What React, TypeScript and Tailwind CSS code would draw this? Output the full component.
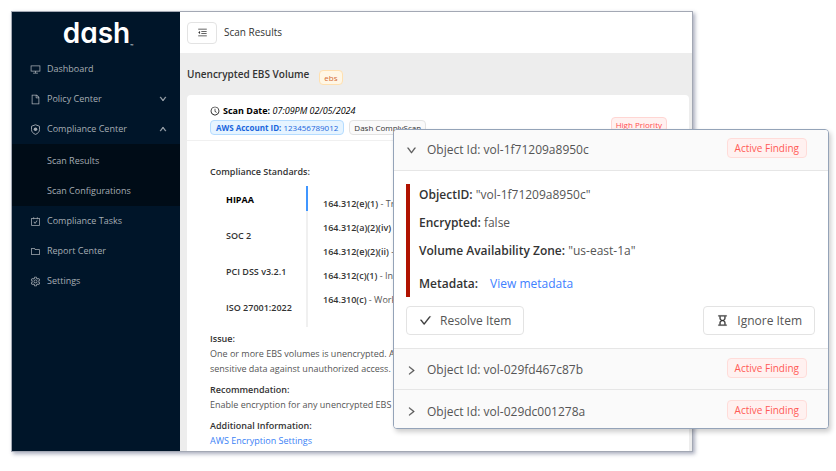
import type { ComponentType, ReactNode } from 'react';
import { clsx } from 'clsx';
import {
  AiOutlineCarryOut,
  AiOutlineCheck,
  AiOutlineClockCircle,
  AiOutlineDesktop,
  AiOutlineDown,
  AiOutlineFile,
  AiOutlineFolder,
  AiOutlineHourglass,
  AiOutlineMenuFold,
  AiOutlineRight,
  AiOutlineSetting,
  AiOutlineUp,
} from 'react-icons/ai';

interface NavItem {
  label: string;
  icon: ComponentType<{ className?: string }>;
  open?: boolean;
  children?: string[];
}

function ShieldIcon({ className }: { className?: string }) {
  return (
    <svg className={className} viewBox="0 0 22 22" fill="none" stroke="currentColor" strokeWidth="1.8">
      <path d="M11 1.5 L19 4.5 V11 C19 16 15.5 19 11 20.8 C6.5 19 3 16 3 11 V4.5 Z" strokeLinejoin="round" />
      <circle cx="11" cy="10.6" r="3.6" fill="currentColor" stroke="none" />
    </svg>
  );
}

const NAV: NavItem[] = [
  { label: 'Dashboard', icon: AiOutlineDesktop },
  { label: 'Policy Center', icon: AiOutlineFile, open: false },
  {
    label: 'Compliance Center',
    icon: ShieldIcon,
    open: true,
    children: ['Scan Results', 'Scan Configurations'],
  },
  { label: 'Compliance Tasks', icon: AiOutlineCarryOut },
  { label: 'Report Center', icon: AiOutlineFolder },
  { label: 'Settings', icon: AiOutlineSetting },
];

const STANDARDS = ['HIPAA', 'SOC 2', 'PCI DSS v3.2.1', 'ISO 27001:2022'];

const CONTROLS = [
  { id: '164.312(e)(1)', text: 'Transmission' },
  { id: '164.312(a)(2)(iv)', text: 'Encryption' },
  { id: '164.312(e)(2)(ii)', text: 'Encryption' },
  { id: '164.312(c)(1)', text: 'Integrity' },
  { id: '164.310(c)', text: 'Workstation' },
];

function Sidebar() {
  return (
    <aside className="w-[168px] shrink-0 bg-[#001529] text-[9px] text-[#a6adb4]">
      <div className="flex h-[42px] items-center justify-center pl-1">
        <span className="font-['Inter',sans-serif] text-[28px] leading-[42px] font-semibold text-white [font-feature-settings:'cv11']">
          dash
        </span>
        <span className="self-end text-[4px] leading-[16px] text-white">™</span>
      </div>
      <nav>
        {NAV.map(({ label, icon: Icon, open, children }) => (
          <div key={label}>
            <button type="button" className="flex h-[30px] w-full items-center gap-[6px] pr-[13px] pl-[18px] text-left">
              <Icon className="size-[11px] shrink-0" />
              <span className="flex-1 whitespace-nowrap">{label}</span>
              {open === true && <AiOutlineUp className="size-[8px]" strokeWidth={70} />}
              {open === false && <AiOutlineDown className="size-[8px]" strokeWidth={70} />}
            </button>
            {children && (
              <div className="bg-[#000c17] pt-[2px]">
                {children.map(child => (
                  <a key={child} href="#" className="flex h-[30px] items-center pl-[35px]">
                    {child}
                  </a>
                ))}
              </div>
            )}
          </div>
        ))}
      </nav>
    </aside>
  );
}

function Section({ title, children }: { title: string; children: ReactNode }) {
  return (
    <section>
      <h3 className="font-semibold text-[#333]">{title}</h3>
      {children}
    </section>
  );
}

function ScanResults() {
  return (
    <main className="min-w-0 flex-1 bg-[#ededed]">
      <header className="flex h-[41px] items-center gap-[7px] bg-white pl-[7px]">
        <button
          type="button"
          aria-label="Collapse menu"
          className="flex h-[22px] w-[30px] items-center justify-center rounded border border-[#e3e3e3]"
        >
          <AiOutlineMenuFold className="size-[11px]" />
        </button>
        <span className="text-[10px]">Scan Results</span>
      </header>
      <div className="flex h-[42px] items-center gap-[10px] pl-[7px]">
        <h1 className="text-[10px] font-semibold">Unencrypted EBS Volume</h1>
        <span className="mt-[6px] rounded-sm border border-[#ffe0b0] bg-[#fff7e6] px-1 text-[8px] leading-[13px] text-[#d46b33]">
          ebs
        </span>
      </div>
      <div className="mr-[3px] ml-[7px] rounded-t bg-white text-[9px] text-[#555]">
        <div className="flex h-[46px] items-end justify-between border-b border-[#f0f0f0] pr-[22px] pb-[5px] pl-[23px]">
          <div>
            <p className="flex items-center gap-[3px] leading-[15px] text-black">
              <AiOutlineClockCircle className="size-[10px]" />
              <span>
                <b className="font-bold">Scan Date:</b> <i>07:09PM 02/05/2024</i>
              </span>
            </p>
            <div className="mt-[2px] flex gap-[5px] text-[8px] leading-[13px]">
              <span className="rounded-sm border border-[#b5dcff] bg-[#e6f4ff] px-[5px] text-[#1a66dd]">
                <b className="font-bold">AWS Account ID:</b> 123456789012
              </span>
              <span className="rounded-sm border border-[#e3e3e3] bg-[#fafafa] px-1 text-[#333]">Dash ComplyScan</span>
            </div>
          </div>
          <span className="mb-[3px] rounded-sm border border-[#ffd6d3] bg-[#fff1f0] px-1 text-[8px] leading-[13px] text-[#ff4d4f]">
            High Priority
          </span>
        </div>
        <div className="px-[23px] pt-[24px] pb-[3px]">
          <h3 className="font-semibold text-[#333]">Compliance Standards:</h3>
          <div className="mt-[7px] mb-[4px] flex">
            <div role="tablist" className="flex w-[98px] flex-col items-start gap-[11px] border-r-2 border-[#f0f0f0] pb-[8px]">
              {STANDARDS.map((name, i) => (
                <button
                  key={name}
                  type="button"
                  role="tab"
                  aria-selected={i === 0}
                  className={clsx(
                    'h-[25px] pt-[4px] pl-[16px] text-left whitespace-nowrap',
                    i === 0
                      ? '-mr-[2px] w-[98px] border-r-2 border-[#4096ff] font-bold text-black'
                      : 'font-semibold text-[#333]'
                  )}
                >
                  {name}
                </button>
              ))}
            </div>
            <ul className="flex flex-col gap-[9px] pt-[10px] pl-[15px] leading-[15px] whitespace-nowrap">
              {CONTROLS.map(({ id, text }) => (
                <li key={id}>
                  <b className="font-semibold text-[#333]">{id}</b> - {text}
                </li>
              ))}
            </ul>
          </div>
          <div className="flex flex-col gap-[6px] leading-[15px]">
            <Section title="Issue:">
              <p>
                One or more EBS volumes is unencrypted. All volumes
                <br />
                sensitive data against unauthorized access.
              </p>
            </Section>
            <Section title="Recommendation:">
              <p>Enable encryption for any unencrypted EBS volumes.</p>
            </Section>
            <Section title="Additional Information:">
              <a href="#" className="text-[#3b82f6]">
                AWS Encryption Settings
              </a>
            </Section>
          </div>
        </div>
      </div>
    </main>
  );
}

function FindingRow({ id, open = false }: { id: string; open?: boolean }) {
  const Arrow = open ? AiOutlineDown : AiOutlineRight;
  return (
    <div
      className={clsx(
        'flex h-[41px] items-center justify-between border-b border-[#e6e6e6] bg-[#fafafa] pr-[21px] pl-[12px]',
        'last:h-[38px] last:border-b-0',
        !open && 'pt-[2px] last:pt-[5px]'
      )}
    >
      <button type="button" aria-expanded={open} className="flex items-center gap-[10px]">
        <Arrow className="size-[11px]" strokeWidth={40} />
        <span>Object Id: {id}</span>
      </button>
      <span className="mb-1 rounded-sm border border-[#ffdcd9] bg-[#fff1f0] px-[7px] text-[10px] leading-[18px] text-[#ff5a55]">
        Active Finding
      </span>
    </div>
  );
}

function FindingPanel() {
  return (
    <section className="absolute top-[129px] left-[393px] w-[436px] overflow-hidden rounded-sm border border-[#94a3b8] bg-white text-[12px] text-[#555] shadow-[2px_3px_5px_rgba(0,0,0,0.2)]">
      <FindingRow id="vol-1f71209a8950c" open />
      <div className="border-b border-[#e6e6e6] pt-[13px] pr-[13px] pb-[13px] pl-[12px]">
        <div className="flex flex-col gap-[8px] border-l-4 border-[#b01200] pt-px pb-[3px] pl-[9px] leading-[20px]">
          <p>
            <b className="font-semibold text-[#333]">ObjectID:</b> "vol-1f71209a8950c"
          </p>
          <p>
            <b className="font-semibold text-[#333]">Encrypted:</b> false
          </p>
          <p>
            <b className="font-semibold text-[#333]">Volume Availability Zone:</b> "us-east-1a"
          </p>
          <p className="flex gap-[12px] pt-[5px]">
            <b className="font-semibold text-[#333]">Metadata:</b>
            <a href="#" className="text-[#4080ff]">
              View metadata
            </a>
          </p>
        </div>
        <div className="mt-[9px] flex items-start justify-between">
          <button type="button" className="flex h-[29px] items-center gap-2 rounded border border-[#e3e3e3] px-[12px]">
            <AiOutlineCheck className="size-[13px] text-[#333]" strokeWidth={30} />
            Resolve Item
          </button>
          <button type="button" className="flex h-[29px] items-center gap-2 rounded border border-[#e3e3e3] px-[12px]">
            <AiOutlineHourglass className="size-[13px] text-[#333]" strokeWidth={30} />
            Ignore Item
          </button>
        </div>
      </div>
      <FindingRow id="vol-029fd467c87b" />
      <FindingRow id="vol-029dc001278a" />
    </section>
  );
}

export default function App() {
  return (
    <div className="relative min-h-screen bg-white pt-[11px] pr-[143px] pl-[11px] font-['Open_Sans',sans-serif] text-[#333]">
      <div className="flex overflow-hidden border border-[#a3a8b4] shadow-[2px_2px_4px_rgba(40,50,90,0.4)]">
        <Sidebar />
        <ScanResults />
      </div>
      <FindingPanel />
    </div>
  );
}
